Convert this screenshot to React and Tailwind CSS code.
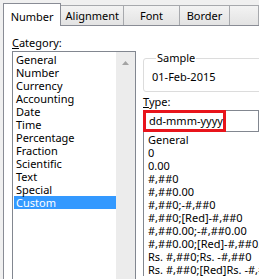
import React from 'react'

const categories = [
  'General', 'Number', 'Currency', 'Accounting', 'Date', 'Time',
  'Percentage', 'Fraction', 'Scientific', 'Text', 'Special', 'Custom',
]

const formats = [
  'General', '0', '0.00', '#,##0', '#,##0.00', '#,##0;-#,##0',
  '#,##0;[Red]-#,##0', '#,##0.00;-#,##0.00', '#,##0.00;[Red]-#,##0.00',
  'Rs. #,##0;Rs. -#,##0', 'Rs. #,##0;[Red]Rs. -#,##0',
]

const Tab = ({ label, active, w }) =>
  active ? (
    <div className={`${w} h-[23px] relative z-10 -mb-px bg-white border border-b-0 border-[#898c95] flex items-start justify-center pt-[5px]`}>
      {label}
    </div>
  ) : (
    <div className={`${w} h-[20px] border-t border-r border-[#a7a9ad] bg-gradient-to-b from-[#f3f3f3] to-[#e3e3e3] flex items-center justify-center`}>
      {label}
    </div>
  )

export default function App() {
  return (
    <div
      className="w-[259px] h-[279px] overflow-hidden bg-[#f0f0f0] text-[11px] leading-[16px] text-black"
      style={{ fontFamily: '"Segoe UI", "Noto Sans", sans-serif' }}
    >
      {/* Tabs */}
      <div className="flex items-end pl-[3px] h-[25px] whitespace-nowrap">
        <Tab label="Number" active w="w-[61px]" />
        <Tab label="Alignment" w="w-[66px]" />
        <Tab label="Font" w="w-[58px]" />
        <Tab label="Border" w="w-[53px]" />
        <Tab label="" w="w-[30px]" />
      </div>

      {/* Panel */}
      <div className="ml-[3px] h-[260px] bg-white border-t border-l border-[#898c95] flex">
        {/* Category */}
        <div className="pl-[8px] pt-[9px] w-[139px] shrink-0">
          <div>
            <span className="underline">C</span>ategory:
          </div>
          <div className="w-[124px] h-[240px] border border-b-0 border-[#828790] flex">
            <div className="flex-1 pt-[1px] pl-[1px]">
              {categories.map(c => (
                <div
                  key={c}
                  className={`h-[13px] leading-[13px] pl-[2px] whitespace-nowrap ${c === 'Custom' ? 'bg-[#3399ff] text-white' : ''}`}
                >
                  {c}
                </div>
              ))}
            </div>
            <div className="w-[19px] bg-[#ececec] flex justify-center pt-[9px]">
              <svg width="7" height="4" viewBox="0 0 7 4">
                <path d="M0 4 L3.5 0 L7 4 Z" fill="#a3a3a3" />
              </svg>
            </div>
          </div>
        </div>

        {/* Right */}
        <div className="pt-[24px] flex-1 min-w-0">
          <fieldset className="border border-[#dcdcdc] rounded-[3px] w-[140px] pl-[8px] pt-[3px] pb-[6px]">
            <legend className="ml-[4px] px-[1px]">Sample</legend>
            01-Feb-2015
          </fieldset>
          <div className="mt-[2px] h-[16px]">
            <span className="underline">T</span>ype:
          </div>
          <div className="w-[116px] h-[22px] border border-[#828790] flex">
            <div className="w-[83px] h-[22px] -m-px border-[3px] border-[#e8141b] pl-[3px] leading-[15px] whitespace-nowrap">
              dd-mmm-yyyy
            </div>
          </div>
          <div className="w-[140px] border-l border-[#828790] pt-[1px] pl-[4px] whitespace-nowrap">
            {formats.map(f => (
              <div key={f} className="h-[13px] leading-[13px]">{f}</div>
            ))}
          </div>
        </div>
      </div>
    </div>
  )
}
